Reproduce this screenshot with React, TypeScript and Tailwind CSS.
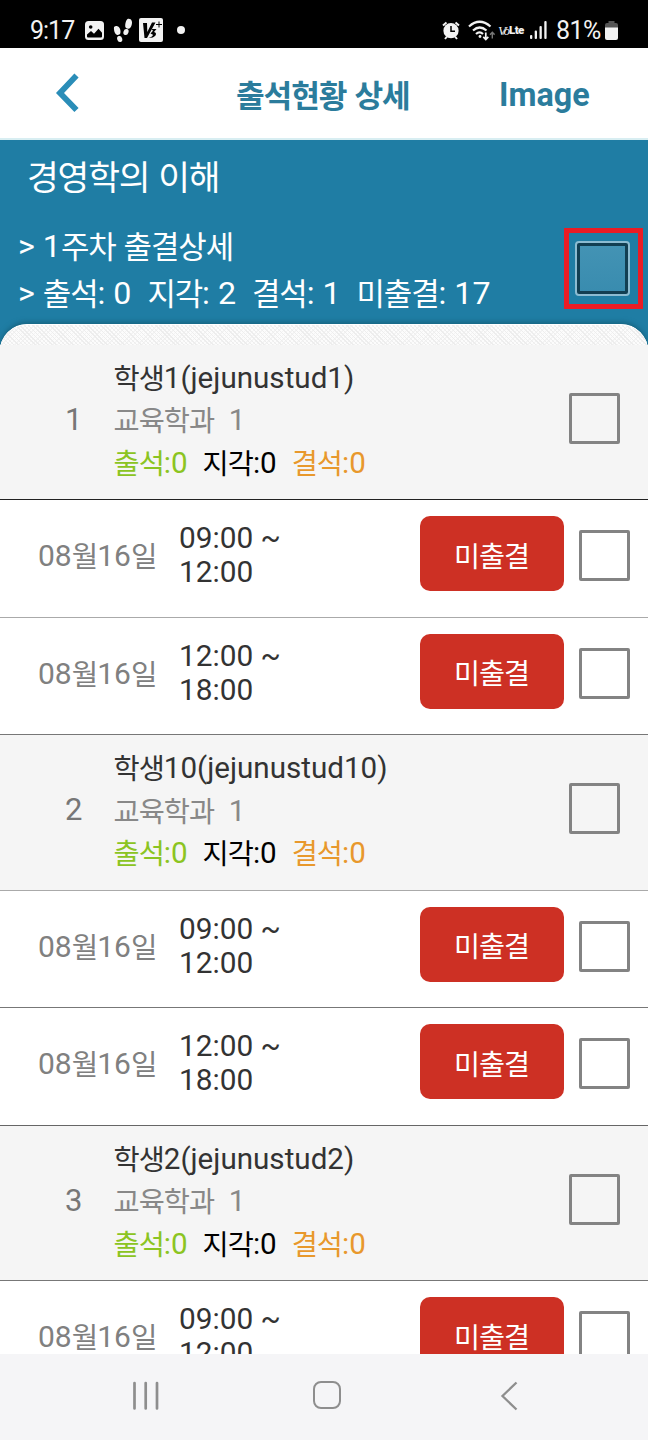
import React from 'react';
import { clsx } from 'clsx';

type Student = {
  no: number;
  name: string;
  line: string;
  periods: { start: string; end: string; line: string }[];
};

const students: Student[] = [
  {
    no: 1,
    name: '학생1(jejunustud1)',
    line: 'border-[#222222]',
    periods: [
      { start: '09:00', end: '12:00', line: 'border-[#aaaaaa]' },
      { start: '12:00', end: '18:00', line: 'border-[#777777]' },
    ],
  },
  {
    no: 2,
    name: '학생10(jejunustud10)',
    line: 'border-[#aaaaaa]',
    periods: [
      { start: '09:00', end: '12:00', line: 'border-[#777777]' },
      { start: '12:00', end: '18:00', line: 'border-[#666666]' },
    ],
  },
  {
    no: 3,
    name: '학생2(jejunustud2)',
    line: 'border-[#777777]',
    periods: [{ start: '09:00', end: '12:00', line: 'border-[#aaaaaa]' }],
  },
];

// Hangul is set smaller and tighter than the latin glyphs around it
const Text = ({ children, className }: { children: string; className?: string }) => (
  <span className={clsx('whitespace-pre', className)}>
    {children.split(/([가-힣]+)/).map((run, i) =>
      i % 2 ? (
        <span key={i} className="align-[-0.045em] text-[0.96em] leading-none tracking-[-0.035em]">
          {run}
        </span>
      ) : (
        run
      )
    )}
  </span>
);

const CheckBox = () => (
  <div className="size-[51px] shrink-0 rounded-[2px] border-3 border-[#838383]" />
);

const StatusBar = () => (
  <div className="flex h-12 shrink-0 items-center bg-black pt-3 pl-[30px] pr-[30px] text-[#f2f2f2]">
    <span className="w-[55px] text-[25px] leading-none tracking-[-1px]">9:17</span>
    <svg className="size-[19px]" viewBox="0 0 19 19">
      <rect width="19" height="19" rx="3.5" fill="currentColor" />
      <circle cx="5.7" cy="6" r="1.8" fill="black" />
      <path d="M2 15.5v-2l4-3.5 3 2.8 4.5-5 3.500 4v3.7q0 1-1 1H3q-1 0-1-1z" fill="black" />
    </svg>
    <svg className="ml-[9px] h-[25px] w-5" viewBox="0 0 20 25" fill="currentColor">
      <path d="M1 9C3.500 6.500 7.500 9 7.500 13.500c0 2.500-.5 3-2.700 3.500C2.500 17.500.5 13 1 9Z" />
      <ellipse cx="6.700" cy="21" rx="2.500" ry="3.100" transform="rotate(-18 6.700 21)" />
      <path d="M14.500 1C18.500 0 20 4 18.500 7.500c-.6 2-1.500 3-3.200 3.200-2.200 0-3.400-1-3.100-3.700.2-2.500 1-5 2.300-6Z" />
      <ellipse cx="13" cy="14" rx="2.500" ry="3.100" transform="rotate(20 13 14)" />
    </svg>
    <svg className="ml-[6px] size-6" viewBox="0 0 24 24">
      <rect width="24" height="24" rx="2" fill="currentColor" />
      <path d="M4 5h4l.3 9L13 4.500h3.500L8 20H5.500z" fill="black" />
      <path d="M12.500 11h5l-2.500 3q3 .8 1.500 3.500-2 2.500-7 2.500 4.500-1.500 4.500-3.200L11.500 15.500l2.500-2.800z" fill="black" />
      <path d="M17 6.500h6M20 3.500v6" stroke="black" strokeWidth="1" />
    </svg>
    <div className="ml-[14px] size-2 rounded-full bg-[#f2f2f2]" />

    <svg className="ml-auto h-[19px] w-[18px]" viewBox="0 0 18 19" fill="none" stroke="currentColor">
      <circle cx="9" cy="9.700" r="7.600" fill="currentColor" stroke="none" />
      <path d="M1 4.500 4.500 1.500M17 4.500 13.500 1.500M3 18l2-2.500M15 18l-2-2.500" strokeWidth="2" />
      <path d="M9 5v5.200h4" stroke="black" strokeWidth="1.500" />
    </svg>
    <svg className="ml-[8px] h-[21px] w-[27px]" viewBox="0 0 27 21" fill="none" stroke="currentColor">
      <path d="M1 6.500Q11.500-3 22.500 6.500M5 10.500q6.700-6 13.500 0M8 14q3.500-3.300 7 0" strokeWidth="2.200" />
      <circle cx="12" cy="16.500" r="1.400" fill="currentColor" stroke="none" />
      <path d="M17.800 12.500v7M15.300 16.800l2.500 2.700 2.500-2.700" strokeWidth="1.700" />
      <path d="M24.300 18.500v-6M22 14.700l2.300-2.500 2.300 2.500" stroke="#777777" strokeWidth="1.400" />
    </svg>
    <span className="ml-[3px] flex w-[27px] items-center">
      <span className="w-[11px] font-['Liberation_Serif'] text-[13px] leading-none tracking-[-3px] italic">
        V/o
      </span>
      <span className="pt-[2px] text-[11.500px] leading-none font-black tracking-[-0.6px]">Lte</span>
    </span>
    <svg className="ml-[5px] h-[18px] w-[17px]" viewBox="0 0 17 18" fill="currentColor">
      <rect x="0" y="14" width="2.300" height="4" rx="1" />
      <rect x="4.700" y="9.500" width="2.300" height="8.500" rx="1" />
      <rect x="9.500" y="5" width="2.300" height="13" rx="1" />
      <rect x="14.300" y="0" width="2.300" height="18" rx="1" />
    </svg>
    <span className="ml-[9px] w-[46px] text-[25px] leading-none tracking-[-0.6px]">81%</span>
    <svg className="ml-[3px] h-[19px] w-[13px]" viewBox="0 0 13 19">
      <path d="M3.500 0h6v2H11q2 0 2 2v3H0V4q0-2 2-2h1.500z" fill="#555555" />
      <path d="M0 6.500h13V17q0 2-2 2H2q-2 0-2-2z" fill="currentColor" />
    </svg>
  </div>
);

const TitleBar = () => (
  <header className="grid h-23 shrink-0 grid-cols-[236px_263px_1fr] items-center border-b-2 border-[#d8eef2] bg-white font-bold text-[#2b7c9c]">
    <svg className="ml-[55px] h-[40px] w-[25px]" viewBox="0 0 25 40" fill="none">
      <path d="M21.500 2.500 5 20 21.500 37" stroke="#2a8db8" strokeWidth="5.800" />
    </svg>
    <Text className="pt-[4px] text-[32.500px]">출석현황 상세</Text>
    <span className="pt-[5px] text-[32.300px]">Image</span>
  </header>
);

const Summary = () => (
  <section className="flex h-[204.5px] shrink-0 flex-col overflow-hidden bg-[#1f7da4] text-white">
    <div className="flex h-[74px] shrink-0 items-center pb-[3px] pl-[27px] text-[36px]">
      <Text>경영학의 이해</Text>
    </div>
    <div className="flex h-[109.5px] shrink-0 justify-between pl-[18px] pr-[5px]">
      <div className="pt-[9px] text-[32.200px] leading-[47px]">
        <div>
          <Text>{'> 1주차 출결상세'}</Text>
        </div>
        <div>
          <Text>{'> 출석: 0  지각: 2  결석: 1  미출결: 17'}</Text>
        </div>
      </div>
      <div className="mt-[14px] flex h-[81px] w-[79px] items-center justify-center border-5 border-[#ea1c24] pr-[2px]">
        <div className="size-[55px] rounded-[4px] border-2 border-[#8cbcd1] bg-[#123f52] p-[3px]">
          <div className="size-full bg-linear-to-b from-[#4393b4] to-[#398caf]" />
        </div>
      </div>
    </div>
    {/* only the top of the sheet shows, the list covers the rest */}
    <div className="h-[40px] shrink-0 rounded-t-[27px] border-t border-white bg-[#f7f7f7] bg-[repeating-linear-gradient(45deg,#f1f1f100_0_2px,#ededed_2px_3px),repeating-linear-gradient(-45deg,#fcfcfc_0_2px,#f3f3f3_2px_3px)] shadow-[0_-2px_5px_#17637f]" />
  </section>
);

const StudentRow = ({ no, name, line }: Student) => (
  <div className={clsx('flex h-[155.5px] shrink-0 items-center border-b bg-[#f5f5f5] pr-[28px]', line)}>
    <div className="w-[113.5px] pb-[4px] pl-[65px] text-[31px] text-[#777777]">{no}</div>
    <div className="grow pb-[3px] text-[29.600px] leading-[42.500px] text-[#333333]">
      <div>
        <Text>{name}</Text>
      </div>
      <div className="text-[#888888]">
        <Text>교육학과  1</Text>
      </div>
      <div className="flex gap-[15px]">
        <Text className="text-[#8bc422]">출석:0</Text>
        <Text className="text-black">지각:0</Text>
        <Text className="text-[#e8982c]">결석:0</Text>
      </div>
    </div>
    <div className="pb-[7px]">
      <CheckBox />
    </div>
  </div>
);

const PeriodRow = ({ start, end, line }: Student['periods'][number]) => (
  <div className={clsx('flex h-[117.5px] shrink-0 items-start border-b bg-white pr-[18px]', line)}>
    <div className="w-[179px] pt-[38px] pl-[38px] text-[30px] leading-[36px] text-[#808080]">
      <Text>08월16일</Text>
    </div>
    <div className="grow pt-[21px] text-[29.800px] leading-[34px] text-[#333333]">
      <div>{start} ~</div>
      <div>{end}</div>
    </div>
    <button className="mt-[16px] mr-[15px] h-[75px] w-[144px] rounded-[10px] bg-[#cd3024] pt-[5px] pr-[1px] text-[29.500px] text-white">
      <Text>미출결</Text>
    </button>
    <div className="pt-[30px]">
      <CheckBox />
    </div>
  </div>
);

const NavigationBar = () => (
  <nav className="flex h-[86px] shrink-0 items-start bg-[#f5f5f7] pt-[27px] pl-[132px] text-[#8e8e8e]">
    <svg className="h-[30px] w-[28px]" viewBox="0 0 28 30" stroke="currentColor" strokeWidth="2.700">
      <path d="M2.500 2v25.500M13.700 2v25.500M25 2v25.500" strokeLinecap="round" />
    </svg>
    <div className="ml-[153px] h-[28px] w-[28px] rounded-[8px] border-[2.500px] border-current" />
    <svg className="ml-[159px] h-[30px] w-[18px]" viewBox="0 0 18 30" fill="none">
      <path d="M16.500 1.500 2.500 15l14 13.500" stroke="currentColor" strokeWidth="2.300" />
    </svg>
  </nav>
);

export default function App() {
  return (
    <div className="flex h-[1440px] w-[648px] flex-col overflow-hidden bg-white font-[Roboto,'Noto_Sans_CJK_KR',sans-serif]">
      <StatusBar />
      <TitleBar />
      <main className="flex min-h-0 grow flex-col overflow-hidden">
        <Summary />
        {students.map((student) => (
          <React.Fragment key={student.no}>
            <StudentRow {...student} />
            {student.periods.map((period) => (
              <PeriodRow key={period.start} {...period} />
            ))}
          </React.Fragment>
        ))}
      </main>
      <NavigationBar />
    </div>
  );
}
